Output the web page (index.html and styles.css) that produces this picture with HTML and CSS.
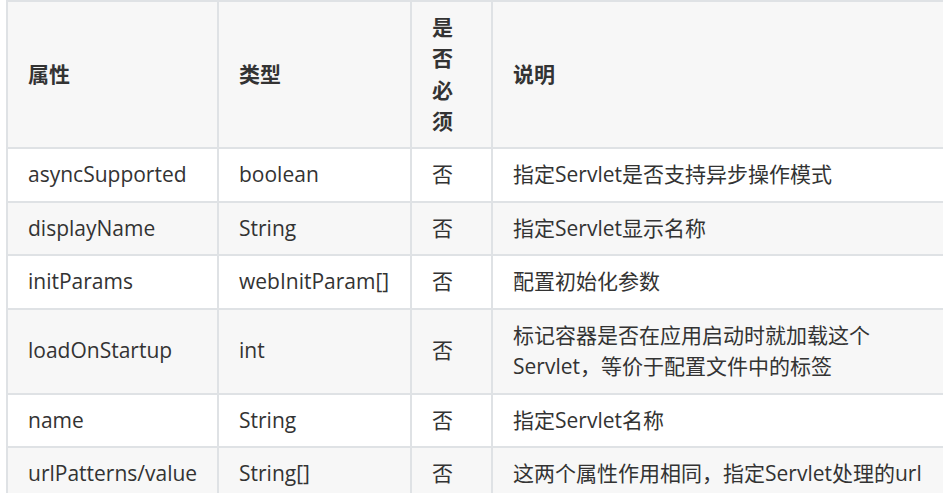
FILE: index.html
```html
<!DOCTYPE html>
<html lang="zh-CN">
<head>
<meta charset="utf-8">
<title>WebServlet 属性</title>
<link rel="stylesheet" href="styles.css">
</head>
<body>
<table class="attr-table">
  <thead>
    <tr>
      <th class="c1">属性</th>
      <th class="c2">类型</th>
      <th class="c3">是否必须</th>
      <th class="c4">说明</th>
    </tr>
  </thead>
  <tbody>
    <tr>
      <td>asyncSupported</td>
      <td>boolean</td>
      <td>否</td>
      <td>指定Servlet是否支持异步操作模式</td>
    </tr>
    <tr>
      <td>displayName</td>
      <td>String</td>
      <td>否</td>
      <td>指定Servlet显示名称</td>
    </tr>
    <tr>
      <td>initParams</td>
      <td>webInitParam[]</td>
      <td>否</td>
      <td>配置初始化参数</td>
    </tr>
    <tr>
      <td>loadOnStartup</td>
      <td>int</td>
      <td>否</td>
      <td>标记容器是否在应用启动时就加载这个Servlet，等价于配置文件中的标签</td>
    </tr>
    <tr>
      <td>name</td>
      <td>String</td>
      <td>否</td>
      <td>指定Servlet名称</td>
    </tr>
    <tr>
      <td>urlPatterns/value</td>
      <td>String[]</td>
      <td>否</td>
      <td>这两个属性作用相同，指定Servlet处理的url</td>
    </tr>
  </tbody>
</table>
</body>
</html>
```

FILE: styles.css
```css
html, body {
  margin: 0;
  padding: 0;
  overflow: hidden;
  background: #ffffff;
}

body {
  padding-left: 6px;
  font-family: "Open Sans", "Noto Sans CJK SC", sans-serif;
  font-size: 21px;
  color: #333333;
}

.attr-table {
  border-collapse: separate;
  border-spacing: 0;
  table-layout: fixed;
  width: 947px;
  border-top: 2px solid #dfe2e5;
  border-left: 2px solid #dfe2e5;
}

.attr-table th,
.attr-table td {
  box-sizing: border-box;
  border-right: 2px solid #dfe2e5;
  border-bottom: 2px solid #dfe2e5;
  padding: 10px 20px;
  line-height: 31.5px;
  text-align: left;
  vertical-align: middle;
}

.attr-table th {
  font-weight: 700;
  padding-top: 9.5px;
  padding-bottom: 9.5px;
}

.attr-table .c1 { width: 211px; }
.attr-table .c2 { width: 193px; }
.attr-table .c3 { width: 81px; }
.attr-table .c4 { width: 460px; }

.attr-table thead tr,
.attr-table tbody tr:nth-child(even) {
  background: #f7f7f7;
}

.attr-table tbody tr:nth-child(odd) {
  background: #ffffff;
}
```
